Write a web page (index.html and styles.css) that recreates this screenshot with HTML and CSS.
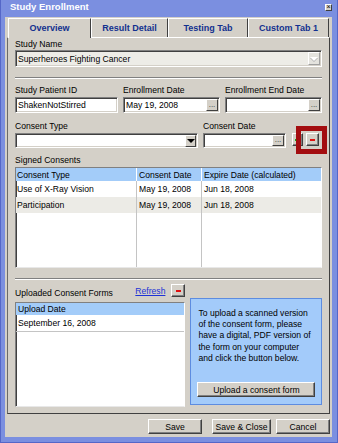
FILE: index.html
```html
<!DOCTYPE html>
<html>
<head>
    <title>Study Enrollment</title>
    <link rel="stylesheet" href="styles.css">
</head>
<body>
    <div class="window">
        <div class="titlebar">
            <span class="title">Study Enrollment</span>
            <span class="close">&times;</span>
        </div>

        <div class="client">
            <!-- Tab strip -->
            <div class="tabs">
                <div class="tab tab-overview active">Overview</div>
                <div class="tab tab-result">Result Detail</div>
                <div class="tab tab-testing">Testing Tab</div>
                <div class="tab tab-custom">Custom Tab 1</div>
            </div>

            <div class="panel">
                <div class="lbl">Study Name</div>
                <div class="select study disabled">
                    <span class="val">Superheroes Fighting Cancer</span>
                    <span class="arrow"><i></i></span>
                </div>

                <div class="sep"></div>

                <!-- Patient + enrollment dates -->
                <div class="row row-dates">
                    <div class="fld f-id">
                        <div class="lbl">Study Patient ID</div>
                        <div class="input"><span class="val">ShakenNotStirred</span></div>
                    </div>
                    <div class="fld f-date">
                        <div class="lbl">Enrollment Date</div>
                        <div class="input"><span class="val">May 19, 2008</span><span class="dots">...</span></div>
                    </div>
                    <div class="fld f-date">
                        <div class="lbl">Enrollment End Date</div>
                        <div class="input"><span class="val"></span><span class="dots">...</span></div>
                    </div>
                </div>

                <!-- Consent type / date -->
                <div class="row row-consent">
                    <div class="fld f-type">
                        <div class="lbl">Consent Type</div>
                        <div class="select"><span class="val"></span><span class="arrow"><i></i></span></div>
                    </div>
                    <div class="fld f-cdate">
                        <div class="lbl">Consent Date</div>
                        <div class="input"><span class="val"></span><span class="dots">...</span></div>
                    </div>
                    <div class="mini add"><i></i></div>
                    <div class="mini remove"><i></i></div>
                    <div class="highlight"></div>
                </div>

                <div class="lbl signed-lbl">Signed Consents</div>
                <div class="grid">
                    <table>
                        <colgroup><col class="c1"><col class="c2"><col class="c3"></colgroup>
                        <tr class="head"><th>Consent Type</th><th>Consent Date</th><th>Expire Date (calculated)</th></tr>
                        <tr class="r"><td>Use of X-Ray Vision</td><td>May 19, 2008</td><td>Jun 18, 2008</td></tr>
                        <tr class="r alt"><td>Participation</td><td>May 19, 2008</td><td>Jun 18, 2008</td></tr>
                        <tr class="filler"><td></td><td></td><td></td></tr>
                    </table>
                </div>

                <div class="sep sep2"></div>

                <!-- Uploaded forms -->
                <div class="uploads">
                    <div class="up-left">
                        <div class="up-head">
                            <span class="up-lbl">Uploaded Consent Forms</span>
                            <a class="refresh" href="#">Refresh</a>
                            <div class="mini remove"><i></i></div>
                        </div>
                        <div class="list">
                            <div class="list-head">Upload Date</div>
                            <div class="list-row">September 16, 2008</div>
                        </div>
                    </div>
                    <div class="info">
                        <p>To upload a scanned version<br>of the consent form, please<br>have a digital, PDF version of<br>the form on your computer<br>and click the button below.</p>
                        <button class="btn upload">Upload a consent form</button>
                    </div>
                </div>
            </div>

            <div class="actions">
                <button class="btn b-save">Save</button>
                <button class="btn b-close">Save &amp; Close</button>
                <button class="btn b-cancel">Cancel</button>
            </div>
        </div>
    </div>
</body>
</html>
```
FILE: styles.css
```css
* {
    box-sizing: border-box;
}

body {
    margin: 0;
    font-family: "Liberation Sans", Arial, sans-serif;
    font-size: 8.6px;
    color: #000;
    background: #fff;
}

.window {
    width: 338px;
    height: 443px;
    background: #7b8fe0;
    border: 1px solid #5567c8;
    border-top: none;
    display: flex;
    flex-direction: column;
}

.titlebar {
    height: 17px;
    display: flex;
    align-items: flex-start;
}

.title {
    color: #fff;
    font-weight: bold;
    font-size: 9.5px;
    line-height: 14px;
    margin-left: 9px;
}

.close {
    margin-left: auto;
    margin-right: 5px;
    margin-top: 4px;
    width: 7px;
    height: 7px;
    background: #d4d0c8;
    border: 1px solid #fff;
    border-right-color: #404040;
    border-bottom-color: #404040;
    font-size: 7px;
    line-height: 4px;
    text-align: center;
    color: #000;
}

.client {
    flex: 1;
    margin: 0 5px 5px 4px;
    background: #d4d0c8;
    padding: 1px 2px 0;
    display: flex;
    flex-direction: column;
}

/* tabs */
.tabs {
    display: flex;
    height: 19px;
    padding-left: 1px;
    position: relative;
    z-index: 1;
}

.tab {
    height: 19px;
    border: 1px solid #fff;
    border-right-color: #404040;
    border-bottom: none;
    text-align: center;
    font-weight: bold;
    font-size: 9px;
    line-height: 18px;
    color: #12308f;
    background: #d4d0c8;
}

.tab.active {
    height: 20px;
}

.tab-overview { width: 83px; }
.tab-result { width: 77px; }
.tab-testing { width: 80px; }
.tab-custom { width: 81px; }

.panel {
    height: 377px;
    border: 1px solid #404040;
    border-top-color: #fff;
    border-left-color: #6a6a6a;
    padding: 0 7px;
}

.lbl {
    line-height: 12px;
    height: 12px;
    white-space: nowrap;
}

/* inputs */
.input, .select {
    display: flex;
    align-items: center;
    background: #fff;
    border: 1px solid #808080;
    border-right-color: #fff;
    border-bottom-color: #fff;
    box-shadow: inset 1px 1px 0 #404040, inset -1px -1px 0 #d4d0c8;
    padding: 0 1px 0 2px;
}

.val {
    flex: 1;
    white-space: nowrap;
    overflow: hidden;
}

.select.study {
    height: 17px;
    background: #edece7;
}

.arrow {
    width: 12px;
    height: 13px;
    background: #d4d0c8;
    border: 1px solid #fff;
    border-right-color: #404040;
    border-bottom-color: #404040;
    display: flex;
    align-items: center;
    justify-content: center;
}

.arrow i {
    width: 0;
    height: 0;
    border-left: 4px solid transparent;
    border-right: 4px solid transparent;
    border-top: 4px solid #000;
}

.select.disabled .arrow {
    background: #e4e3de;
    border-color: #fff #a0a0a0 #a0a0a0 #fff;
}

.select.disabled .arrow i {
    border-top-color: #fff;
    filter: drop-shadow(0 1px 0 #b0b0b0);
}

.dots {
    width: 12px;
    height: 12px;
    background: #d4d0c8;
    border: 1px solid #fff;
    border-right-color: #404040;
    border-bottom-color: #404040;
    display: flex;
    align-items: flex-end;
    justify-content: center;
    font-size: 8px;
    line-height: 8px;
    padding-bottom: 1px;
    overflow: hidden;
    color: #333;
}

.sep {
    margin-top: 10px;
    height: 2px;
    border-top: 1px solid #808080;
    border-bottom: 1px solid #fff;
}

.row {
    display: flex;
    gap: 5px;
}

.row-dates {
    margin-top: 5px;
}

.row-dates .input {
    margin-top: 1px;
    height: 16px;
}

.f-id { width: 103px; }
.f-date { width: 97px; }

.row-consent {
    margin-top: 7px;
    position: relative;
    gap: 0;
}

.row-consent .input, .row-consent .select {
    margin-top: 1px;
    height: 15px;
}

.row-consent .dots {
    height: 11px;
}

.row-consent .arrow {
    width: 11px;
    height: 12px;
}

.f-type { width: 183px; }
.f-cdate { width: 83px; margin-left: 5px; }

.mini {
    width: 13px;
    height: 13px;
    margin-top: 13px;
    background: #d4d0c8;
    border: 1px solid #fff;
    border-right-color: #404040;
    border-bottom-color: #404040;
    box-shadow: inset -1px -1px 0 #808080;
    display: flex;
    align-items: center;
    justify-content: center;
}

.mini i {
    width: 5px;
    height: 2px;
    background: #e01010;
}

.mini.add {
    width: 11px;
    margin-left: 6px;
}

.mini.add i {
    width: 3px;
    background: #10b010;
    margin-right: 2px;
}

.row-consent .remove {
    margin-left: 3px;
}

/* red annotation box over the remove button */
.highlight {
    position: absolute;
    left: 281px;
    top: 6px;
    width: 31px;
    height: 28px;
    border: 5px solid #a30d10;
}

.signed-lbl {
    margin-top: 6px;
}

/* table */
.grid, .list {
    margin-top: 1px;
    background: #fff;
    border: 1px solid #808080;
    border-right-color: #fff;
    border-bottom-color: #e8e8e8;
    box-shadow: inset 1px 1px 0 #404040;
}

.grid {
    height: 101px;
}

table {
    width: 100%;
    table-layout: fixed;
    border-collapse: separate;
    border-spacing: 0;
}

.c1 { width: 120px; }
.c2 { width: 65px; }

th, td {
    padding: 0 1px;
    text-align: left;
    font-weight: normal;
    white-space: nowrap;
    overflow: hidden;
}

th + th, td + td {
    border-left: 1px solid #c4c4c4;
}

.head th {
    height: 13px;
    background: #a3ccf9;
    border-left-color: #fff;
    padding-left: 1px;
}

.head th + th, .r td + td {
    padding-left: 2px;
}

.r td {
    height: 16px;
}

.r.alt td {
    background: #ecebe6;
}

.filler td {
    height: 54px;
}

.sep2 {
    margin-top: 10px;
}

/* uploads */
.uploads {
    display: flex;
    gap: 5px;
    margin-top: 4px;
}

.up-left {
    width: 171px;
}

.up-head {
    display: flex;
    height: 15px;
}

.up-lbl {
    margin-top: 3px;
    line-height: 12px;
}

.refresh {
    margin-left: auto;
    margin-right: 6px;
    margin-top: 1px;
    line-height: 12px;
    color: #1d33d6;
}

.up-head .mini {
    margin-top: 0;
    width: 14px;
}

.list {
    margin-top: 3px;
    height: 105px;
}

.list-head {
    height: 12px;
    line-height: 12px;
    background: #a3ccf9;
    padding-left: 2px;
}

.list-row {
    height: 17px;
    line-height: 16px;
    padding-left: 2px;
    border-bottom: 1px solid #c4c4c4;
}

.info {
    width: 132px;
    height: 107px;
    margin-top: 14px;
    background: #a3cbfa;
    border: 1px solid #5d8ce0;
    padding: 9px 0 0 7px;
}

.info p {
    margin: 0;
    line-height: 11.2px;
    white-space: nowrap;
}

/* buttons */
.btn {
    font: inherit;
    height: 15px;
    padding: 0;
    background: #d4d0c8;
    color: #000;
    border: 1px solid #fff;
    border-right-color: #404040;
    border-bottom-color: #404040;
    box-shadow: inset -1px -1px 0 #808080;
}

.upload {
    display: block;
    width: 118px;
    margin-top: 18px;
    margin-left: -1px;
}

.actions {
    display: flex;
    justify-content: flex-end;
    margin-top: 5px;
}

.b-save { width: 54px; }
.b-close { width: 59px; margin-left: 10px; }
.b-cancel { width: 54px; margin-left: 5px; }
```
